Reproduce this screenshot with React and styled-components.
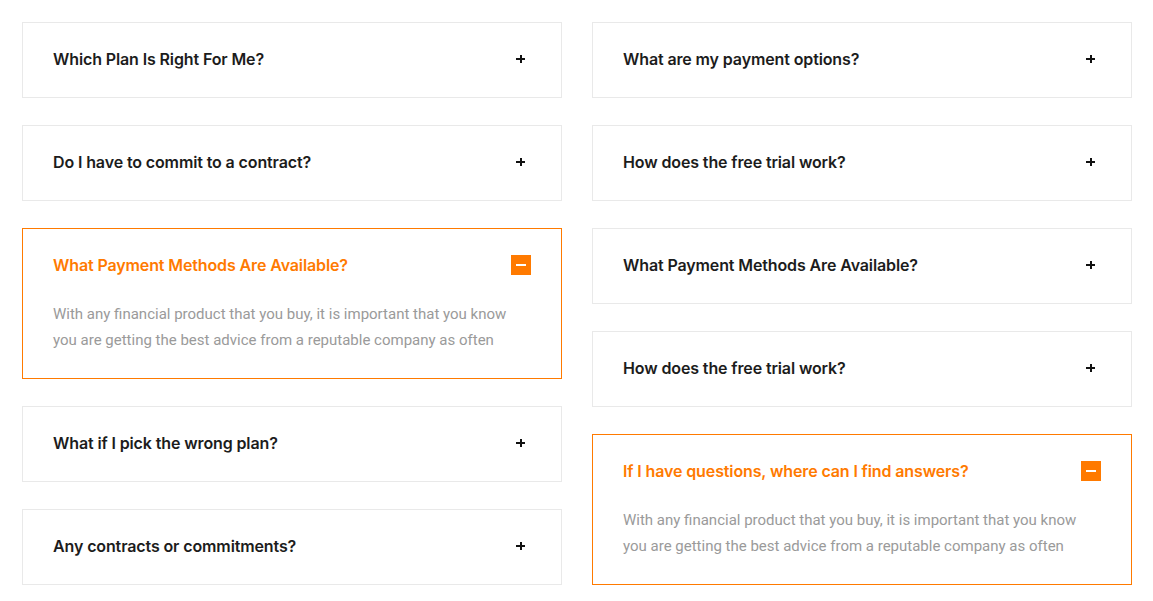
import React from "react";
import styled, { createGlobalStyle } from "styled-components";

const Global = createGlobalStyle`
  html, body { margin: 0; padding: 0; background: #fff; }
  body { font-family: Roboto, "Liberation Sans", sans-serif; }
  * { box-sizing: border-box; }
`;

const Page = styled.div`
  display: grid;
  grid-template-columns: 540px 540px;
  column-gap: 30px;
  padding: 22px 0 0 22px;
`;

const Column = styled.div`
  display: flex;
  flex-direction: column;
  gap: 27px;
`;

const Item = styled.div`
  border: 1px solid ${(p) => (p.$open ? "#ff7a00" : "#e9e9e9")};
  background: #fff;
`;

const Header = styled.div`
  display: flex;
  align-items: center;
  justify-content: space-between;
  padding: 25px 30px 27px 30px;
  cursor: pointer;
`;

const Title = styled.h4`
  margin: 0;
  font-family: Inter, "Noto Sans", sans-serif;
  font-weight: 600;
  font-size: 16px;
  line-height: 22px;
  letter-spacing: -0.12px;
  color: ${(p) => (p.$open ? "#ff7a00" : "#1c1c1c")};
`;

const Toggle = styled.span`
  width: 20px;
  height: 20px;
  flex: none;
  position: relative;
  margin-top: -1px;
  background: ${(p) => (p.$open ? "#ff7a00" : "transparent")};
  color: ${(p) => (p.$open ? "#fff" : "#111")};
`;

const Bar = styled.span`
  position: absolute;
  left: ${(p) => (p.$vertical ? "9px" : p.$plus ? "5px" : "5px")};
  top: ${(p) => (p.$vertical ? "6px" : "9px")};
  width: ${(p) => (p.$vertical ? "2px" : p.$plus ? "9px" : "10px")};
  height: ${(p) => (p.$vertical ? "8px" : "2px")};
  background: currentColor;
`;

const Body = styled.p`
  margin: -2px 0 0 0;
  padding: 0 30px 25px 30px;
  font-family: Roboto, "Liberation Sans", sans-serif;
  font-size: 15px;
  line-height: 26px;
  color: #9a9a9a;
`;

const ANSWER =
  "With any financial product that you buy, it is important that you know you are getting the best advice from a reputable company as often";

const left = [
  { q: "Which Plan Is Right For Me?" },
  { q: "Do I have to commit to a contract?" },
  { q: "What Payment Methods Are Available?", open: true },
  { q: "What if I pick the wrong plan?" },
  { q: "Any contracts or commitments?" },
];

const right = [
  { q: "What are my payment options?" },
  { q: "How does the free trial work?" },
  { q: "What Payment Methods Are Available?" },
  { q: "How does the free trial work?" },
  { q: "If I have questions, where can I find answers?", open: true },
];

function Faq({ q, open }) {
  return (
    <Item $open={open}>
      <Header>
        <Title $open={open}>{q}</Title>
        <Toggle $open={open}>
          {open ? (
            <Bar />
          ) : (
            <>
              <Bar $plus />
              <Bar $plus $vertical />
            </>
          )}
        </Toggle>
      </Header>
      {open && <Body>{ANSWER}</Body>}
    </Item>
  );
}

export default function App() {
  return (
    <>
      <Global />
      <Page>
        <Column>
          {left.map((f, i) => (
            <Faq key={i} {...f} />
          ))}
        </Column>
        <Column>
          {right.map((f, i) => (
            <Faq key={i} {...f} />
          ))}
        </Column>
      </Page>
    </>
  );
}
